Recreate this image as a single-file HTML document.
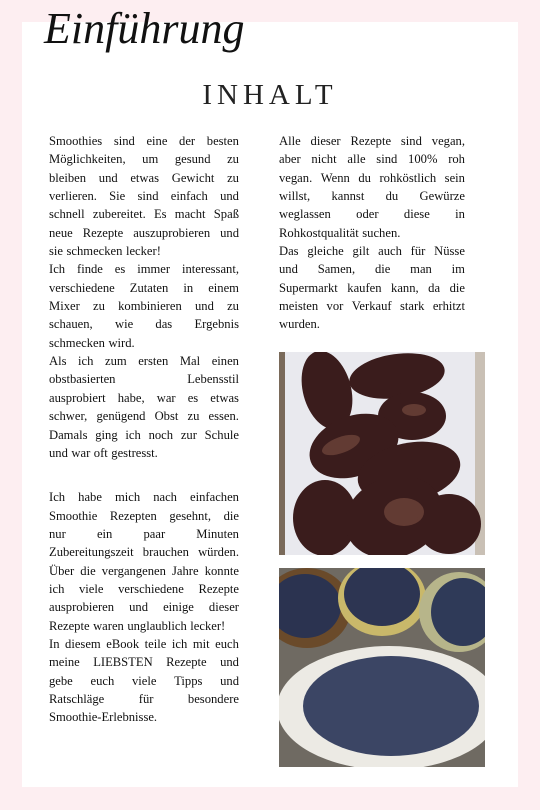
<!DOCTYPE html>
<html><head><meta charset="utf-8"><style>
html,body{margin:0;padding:0}
body{width:540px;height:810px;background:#fdeef1;position:relative;overflow:hidden;font-family:"Liberation Serif",serif;color:#111}
.page{position:absolute;left:22px;top:22px;width:496px;height:765px;background:#fff}
h1{position:absolute;left:44px;top:3px;margin:0;font-style:italic;font-weight:normal;font-size:44px;line-height:52px;color:#111}
h2{position:absolute;left:0;width:540px;top:78px;margin:0;text-align:center;font-weight:normal;font-size:29px;letter-spacing:5px;line-height:34px;color:#222}
.col{position:absolute;font-size:12.6px;line-height:18.35px}
.col div{white-space:nowrap;display:flex;justify-content:space-between}
.col div.l{justify-content:flex-start;gap:3.5px}
.img{position:absolute;left:279px;width:206px;overflow:hidden}
</style></head><body>
<div class="page"></div>
<h1>Einführung</h1>
<h2>INHALT</h2>
<div class="col" style="left:49px;top:132px;width:190px">
<div><span>Smoothies</span><span>sind</span><span>eine</span><span>der</span><span>besten</span></div>
<div><span>Möglichkeiten,</span><span>um</span><span>gesund</span><span>zu</span></div>
<div><span>bleiben</span><span>und</span><span>etwas</span><span>Gewicht</span><span>zu</span></div>
<div><span>verlieren.</span><span>Sie</span><span>sind</span><span>einfach</span><span>und</span></div>
<div><span>schnell</span><span>zubereitet.</span><span>Es</span><span>macht</span><span>Spaß</span></div>
<div><span>neue</span><span>Rezepte</span><span>auszuprobieren</span><span>und</span></div>
<div class="l"><span>sie</span><span>schmecken</span><span>lecker!</span></div>
<div><span>Ich</span><span>finde</span><span>es</span><span>immer</span><span>interessant,</span></div>
<div><span>verschiedene</span><span>Zutaten</span><span>in</span><span>einem</span></div>
<div><span>Mixer</span><span>zu</span><span>kombinieren</span><span>und</span><span>zu</span></div>
<div><span>schauen,</span><span>wie</span><span>das</span><span>Ergebnis</span></div>
<div class="l"><span>schmecken</span><span>wird.</span></div>
<div><span>Als</span><span>ich</span><span>zum</span><span>ersten</span><span>Mal</span><span>einen</span></div>
<div><span>obstbasierten</span><span>Lebensstil</span></div>
<div><span>ausprobiert</span><span>habe,</span><span>war</span><span>es</span><span>etwas</span></div>
<div><span>schwer,</span><span>genügend</span><span>Obst</span><span>zu</span><span>essen.</span></div>
<div><span>Damals</span><span>ging</span><span>ich</span><span>noch</span><span>zur</span><span>Schule</span></div>
<div class="l"><span>und</span><span>war</span><span>oft</span><span>gestresst.</span></div>
<div style="height:26px"></div>
<div><span>Ich</span><span>habe</span><span>mich</span><span>nach</span><span>einfachen</span></div>
<div><span>Smoothie</span><span>Rezepten</span><span>gesehnt,</span><span>die</span></div>
<div><span>nur</span><span>ein</span><span>paar</span><span>Minuten</span></div>
<div><span>Zubereitungszeit</span><span>brauchen</span><span>würden.</span></div>
<div><span>Über</span><span>die</span><span>vergangenen</span><span>Jahre</span><span>konnte</span></div>
<div><span>ich</span><span>viele</span><span>verschiedene</span><span>Rezepte</span></div>
<div><span>ausprobieren</span><span>und</span><span>einige</span><span>dieser</span></div>
<div class="l"><span>Rezepte</span><span>waren</span><span>unglaublich</span><span>lecker!</span></div>
<div><span>In</span><span>diesem</span><span>eBook</span><span>teile</span><span>ich</span><span>mit</span><span>euch</span></div>
<div><span>meine</span><span>LIEBSTEN</span><span>Rezepte</span><span>und</span></div>
<div><span>gebe</span><span>euch</span><span>viele</span><span>Tipps</span><span>und</span></div>
<div><span>Ratschläge</span><span>für</span><span>besondere</span></div>
<div class="l"><span>Smoothie-Erlebnisse.</span></div>
</div>
<div class="col" style="left:279px;top:132px;width:186px">
<div><span>Alle</span><span>dieser</span><span>Rezepte</span><span>sind</span><span>vegan,</span></div>
<div><span>aber</span><span>nicht</span><span>alle</span><span>sind</span><span>100%</span><span>roh</span></div>
<div><span>vegan.</span><span>Wenn</span><span>du</span><span>rohköstlich</span><span>sein</span></div>
<div><span>willst,</span><span>kannst</span><span>du</span><span>Gewürze</span></div>
<div><span>weglassen</span><span>oder</span><span>diese</span><span>in</span></div>
<div class="l"><span>Rohkostqualität</span><span>suchen.</span></div>
<div><span>Das</span><span>gleiche</span><span>gilt</span><span>auch</span><span>für</span><span>Nüsse</span></div>
<div><span>und</span><span>Samen,</span><span>die</span><span>man</span><span>im</span></div>
<div><span>Supermarkt</span><span>kaufen</span><span>kann,</span><span>da</span><span>die</span></div>
<div><span>meisten</span><span>vor</span><span>Verkauf</span><span>stark</span><span>erhitzt</span></div>
<div class="l"><span>wurden.</span></div>
</div>
<svg class="img" style="top:352px;height:203px" viewBox="0 0 206 203">
<rect width="206" height="203" fill="#e9e9ee"/>
<rect x="0" y="0" width="6" height="203" fill="#7a6a5a"/>
<rect x="196" y="0" width="10" height="203" fill="#c9c0b5"/>
<g fill="#3a1c1c">
<ellipse cx="48" cy="38" rx="24" ry="40" transform="rotate(-15 48 38)"/>
<ellipse cx="118" cy="24" rx="48" ry="22" transform="rotate(-8 118 24)"/>
<ellipse cx="133" cy="64" rx="34" ry="24"/>
<ellipse cx="75" cy="94" rx="46" ry="30" transform="rotate(-20 75 94)"/>
<ellipse cx="130" cy="120" rx="52" ry="29" transform="rotate(-12 130 120)"/>
<ellipse cx="46" cy="166" rx="32" ry="38"/>
<ellipse cx="115" cy="165" rx="50" ry="40" transform="rotate(-20 115 165)"/>
<ellipse cx="170" cy="172" rx="32" ry="30"/>
</g>
<g fill="#8a5a4a" opacity=".5">
<ellipse cx="62" cy="93" rx="20" ry="8" transform="rotate(-20 62 93)"/>
<ellipse cx="125" cy="160" rx="20" ry="14"/>
<ellipse cx="135" cy="58" rx="12" ry="6"/>
</g>
</svg>
<svg class="img" style="top:568px;height:199px" viewBox="0 0 206 199">
<rect width="206" height="199" fill="#6f6a62"/>
<ellipse cx="28" cy="40" rx="44" ry="40" fill="#6a4a2a"/>
<ellipse cx="26" cy="38" rx="36" ry="32" fill="#2b3350"/>
<ellipse cx="103" cy="30" rx="44" ry="38" fill="#c9b86a"/>
<ellipse cx="103" cy="26" rx="38" ry="32" fill="#2d3552"/>
<ellipse cx="180" cy="44" rx="40" ry="40" fill="#b7b58a"/>
<ellipse cx="184" cy="44" rx="32" ry="34" fill="#2f3a58"/>
<ellipse cx="110" cy="140" rx="112" ry="62" fill="#eceae4"/>
<ellipse cx="112" cy="138" rx="88" ry="50" fill="#3b4564"/>
</svg>
</body></html>
